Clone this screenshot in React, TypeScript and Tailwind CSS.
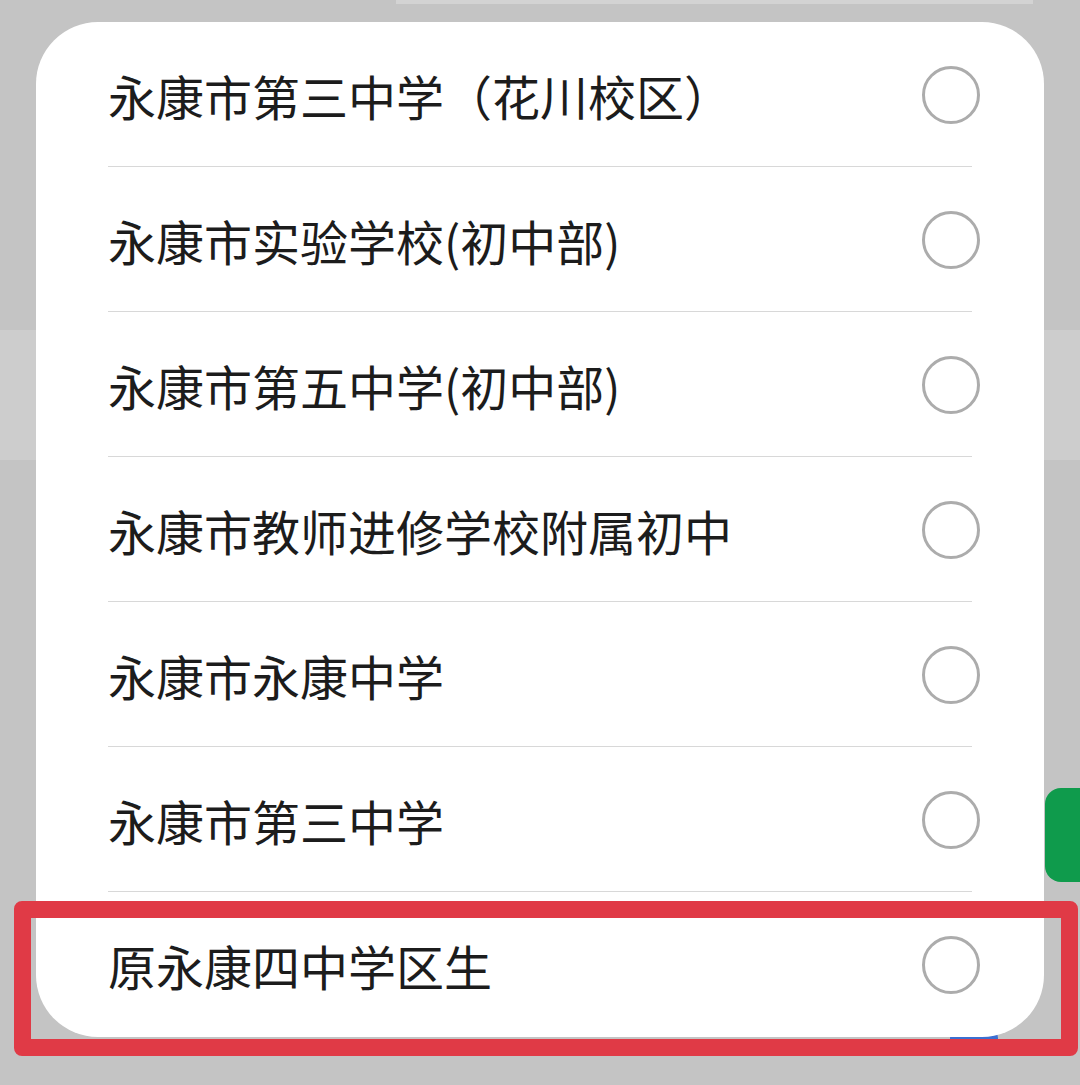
import React from "react";

const items = [
  "永康市第三中学（花川校区）",
  "永康市实验学校(初中部)",
  "永康市第五中学(初中部)",
  "永康市教师进修学校附属初中",
  "永康市永康中学",
  "永康市第三中学",
  "原永康四中学区生",
];

export default function App() {
  return (
    <div
      className="relative w-[1080px] h-[1085px] overflow-hidden bg-[#c4c4c4]"
      style={{ fontFamily: '"Noto Sans CJK SC", "Noto Sans", sans-serif' }}
    >
      {/* background page */}
      <div className="flex flex-col">
        <div className="ml-[396px] h-[4px] w-[637px] bg-[#d3d3d3]" />
        <div className="h-[326px]" />
        <div className="h-[130px] bg-[#cdcdcd]" />
        <div className="h-[328px]" />
        <div className="flex justify-end">
          <div className="h-[94px] w-[35px] rounded-l-[16px] bg-[#0f9b4c]" />
        </div>
        <div className="h-[140px]" />
        <div className="flex h-[30px] items-end pl-[950px]">
          <div className="h-[22px] w-[48px] rounded-[8px] bg-[#3b6fd1]" />
        </div>
      </div>

      {/* modal sheet */}
      <div className="absolute left-[36px] top-[22px] w-[1008px] rounded-[62px] bg-white">
        {items.map((t, i) => (
          <div key={i} className="relative flex h-[145px] items-center pl-[72px] pr-[64px]">
            <span className="flex-1 text-[48px] leading-none text-[#1c1c1c]">{t}</span>
            <span className="h-[58px] w-[58px] rounded-full border-[3px] border-[#acacac]" />
            {i < items.length - 1 && (
              <div className="absolute bottom-0 left-[72px] right-[72px] h-[1.5px] bg-[#d8d8d8]" />
            )}
          </div>
        ))}
      </div>

      {/* red annotation box */}
      <div className="absolute left-[14px] top-[901px] h-[155px] w-[1064px] rounded-[8px] border-[17px] border-[#e03a46]" />
    </div>
  );
}
